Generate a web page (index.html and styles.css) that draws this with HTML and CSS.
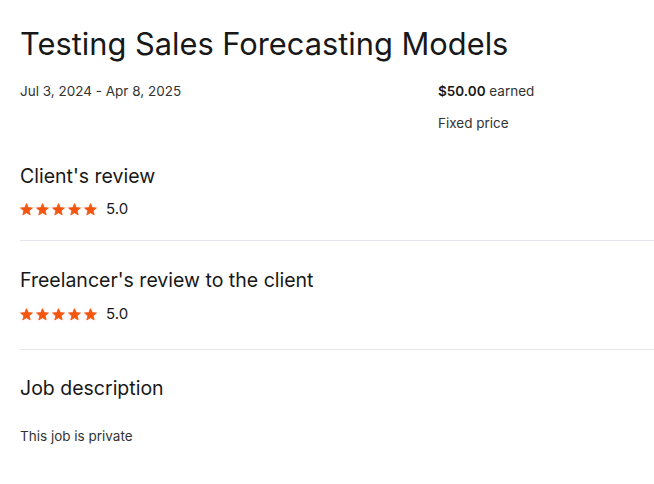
FILE: index.html
```html
<!DOCTYPE html>
<html>
<head>
<meta charset="utf-8">
<link rel="stylesheet" href="styles.css">
</head>
<body>
<div class="page">
  <h1 class="title">Testing Sales Forecasting Models</h1>
  <div class="meta">
    <div class="meta-left">Jul 3, 2024 - Apr 8, 2025</div>
    <div class="meta-right">
      <div class="earned"><strong>$50.00</strong> earned</div>
      <div class="price-type">Fixed price</div>
    </div>
  </div>
  <section class="review review-first">
    <h2 class="section-title">Client's review</h2>
    <div class="rating">
      <span class="stars">
        <svg viewBox="0 0 14 14" class="star"><path d="M7 0.6L8.82 4.89 13.47 5.3 9.95 8.36 11 12.9 7 10.5 3 12.9 4.05 8.36 0.53 5.3 5.18 4.89z"/></svg>
        <svg viewBox="0 0 14 14" class="star"><path d="M7 0.6L8.82 4.89 13.47 5.3 9.95 8.36 11 12.9 7 10.5 3 12.9 4.05 8.36 0.53 5.3 5.18 4.89z"/></svg>
        <svg viewBox="0 0 14 14" class="star"><path d="M7 0.6L8.82 4.89 13.47 5.3 9.95 8.36 11 12.9 7 10.5 3 12.9 4.05 8.36 0.53 5.3 5.18 4.89z"/></svg>
        <svg viewBox="0 0 14 14" class="star"><path d="M7 0.6L8.82 4.89 13.47 5.3 9.95 8.36 11 12.9 7 10.5 3 12.9 4.05 8.36 0.53 5.3 5.18 4.89z"/></svg>
        <svg viewBox="0 0 14 14" class="star"><path d="M7 0.6L8.82 4.89 13.47 5.3 9.95 8.36 11 12.9 7 10.5 3 12.9 4.05 8.36 0.53 5.3 5.18 4.89z"/></svg>
      </span>
      <span class="score">5.0</span>
    </div>
  </section>
  <section class="review review-second">
    <h2 class="section-title">Freelancer's review to the client</h2>
    <div class="rating">
      <span class="stars">
        <svg viewBox="0 0 14 14" class="star"><path d="M7 0.6L8.82 4.89 13.47 5.3 9.95 8.36 11 12.9 7 10.5 3 12.9 4.05 8.36 0.53 5.3 5.18 4.89z"/></svg>
        <svg viewBox="0 0 14 14" class="star"><path d="M7 0.6L8.82 4.89 13.47 5.3 9.95 8.36 11 12.9 7 10.5 3 12.9 4.05 8.36 0.53 5.3 5.18 4.89z"/></svg>
        <svg viewBox="0 0 14 14" class="star"><path d="M7 0.6L8.82 4.89 13.47 5.3 9.95 8.36 11 12.9 7 10.5 3 12.9 4.05 8.36 0.53 5.3 5.18 4.89z"/></svg>
        <svg viewBox="0 0 14 14" class="star"><path d="M7 0.6L8.82 4.89 13.47 5.3 9.95 8.36 11 12.9 7 10.5 3 12.9 4.05 8.36 0.53 5.3 5.18 4.89z"/></svg>
        <svg viewBox="0 0 14 14" class="star"><path d="M7 0.6L8.82 4.89 13.47 5.3 9.95 8.36 11 12.9 7 10.5 3 12.9 4.05 8.36 0.53 5.3 5.18 4.89z"/></svg>
      </span>
      <span class="score">5.0</span>
    </div>
  </section>
  <section class="description">
    <h2 class="section-title">Job description</h2>
    <p class="desc-text">This job is private</p>
  </section>
</div>
</body>
</html>
```

FILE: styles.css
```css
* { box-sizing: border-box; }
html, body { margin: 0; padding: 0; background: #fff; }
body {
  font-family: Inter, "Liberation Sans", Arial, sans-serif;
  color: #181818;
}
.page {
  padding: 24px 0 0 20px;
}
.title {
  margin: 0;
  font-size: 30.8px;
  font-weight: 400;
  line-height: 40px;
  color: #181818;
}
.meta {
  display: flex;
  margin-top: 18px;
  font-size: 13.5px;
  line-height: 18px;
  color: #333;
}
.meta-left { width: 418px; }
.meta-right { display: flex; flex-direction: column; gap: 14px; }
.earned strong { font-weight: 600; color: #181818; }
.section-title {
  margin: 0;
  font-size: 19.5px;
  font-weight: 400;
  line-height: 24px;
  color: #181818;
}
.review {
  border-bottom: 1px solid #e4e5ee;
}
.review-first { padding-top: 32px; padding-bottom: 21px; }
.review-second { padding-top: 27px; padding-bottom: 25px; }
.rating {
  display: flex;
  align-items: center;
  gap: 9px;
  margin-top: 11px;
}
.review-second .rating { margin-top: 12px; }
.stars { display: flex; gap: 3px; }
.star {
  width: 13px; height: 13px; display: block;
  fill: #f6550f; stroke: #f6550f; stroke-width: 0.8; stroke-linejoin: round;
}
.score { font-size: 15px; line-height: 20px; color: #181818; }
.description { padding-top: 26px; }
.desc-text {
  margin: 27px 0 0;
  font-size: 13.5px;
  line-height: 18px;
  color: #333;
}
```
